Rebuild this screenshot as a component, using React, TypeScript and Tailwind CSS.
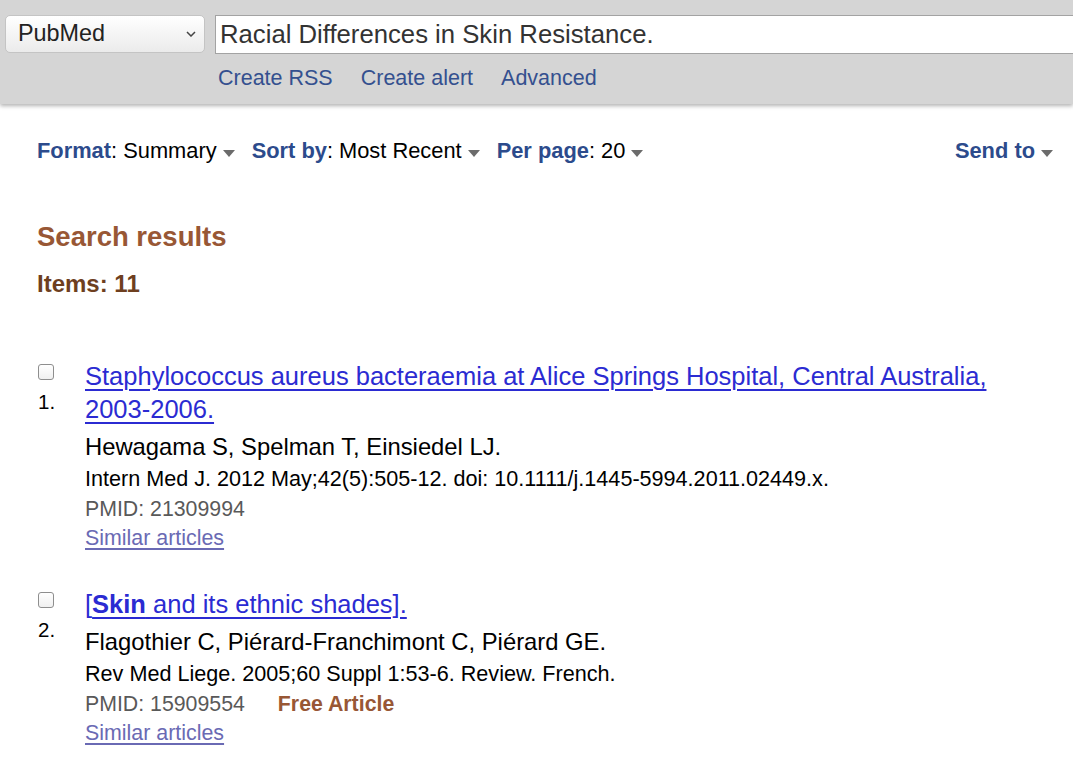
import React from "react";

function Caret() {
  return (
    <svg width="12" height="7" viewBox="0 0 12 7" className="ml-[6px] mt-[4px] shrink-0">
      <path d="M0 0 L12 0 L6 7 Z" fill="#6b6b6b" />
    </svg>
  );
}

function Checkbox() {
  return (
    <div className="w-[16px] h-[16px] rounded-[3px] border border-[#8e8e8e] bg-gradient-to-b from-white to-[#f0f0f0]" />
  );
}

type Item = {
  n: number;
  title: React.ReactNode;
  authors: string;
  journal: string;
  pmid: string;
  free?: boolean;
};

const items: Item[] = [
  {
    n: 1,
    title: (
      <>
        Staphylococcus aureus bacteraemia at Alice Springs Hospital, Central Australia, 2003-2006.
      </>
    ),
    authors: "Hewagama S, Spelman T, Einsiedel LJ.",
    journal: "Intern Med J. 2012 May;42(5):505-12. doi: 10.1111/j.1445-5994.2011.02449.x.",
    pmid: "21309994",
  },
  {
    n: 2,
    title: (
      <>
        [<b>Skin</b> and its ethnic shades].
      </>
    ),
    authors: "Flagothier C, Piérard-Franchimont C, Piérard GE.",
    journal: "Rev Med Liege. 2005;60 Suppl 1:53-6. Review. French.",
    pmid: "15909554",
    free: true,
  },
];

export default function App() {
  return (
    <div className="min-h-[774px] bg-white font-['Liberation_Sans',Arial,sans-serif] overflow-hidden">
      <header className="relative h-[104px] bg-[#d5d5d5] shadow-[0_2px_4px_rgba(0,0,0,0.3)]">
        <div className="flex pt-[15px] pl-[5px] gap-[10px]">
          <div className="w-[200px] h-[38px] shrink-0 rounded-[5px] border border-[#c4c4c4] bg-gradient-to-b from-white to-[#ebebeb] flex items-center justify-between pl-[12px] pr-[8px]">
            <span className="text-[23.4px] leading-none text-[#222]">PubMed</span>
            <svg width="10" height="6" viewBox="0 0 10 6">
              <path d="M1 1 L5 5 L9 1" stroke="#444" strokeWidth="1.5" fill="none" />
            </svg>
          </div>
          <div className="flex-1 h-[39px] bg-white border-y border-l border-[#a3a3a3] flex items-center pl-[4px]">
            <span className="text-[25.7px] leading-none text-[#333]">Racial Differences in Skin Resistance.</span>
          </div>
        </div>
        <nav className="flex gap-[28px] pl-[218px] mt-[12px] text-[21.5px] leading-[24px] text-[#34508f]">
          <span>Create RSS</span>
          <span>Create alert</span>
          <span>Advanced</span>
        </nav>
      </header>

      <main className="px-[37px]">
        <div className="flex items-center pt-[35px] text-[21.85px] leading-[24px] text-black">
          <div className="flex items-center">
            <span className="font-bold text-[#2c4b8c]">Format</span>
            <span>: Summary</span>
            <Caret />
          </div>
          <div className="flex items-center ml-[17px]">
            <span className="font-bold text-[#2c4b8c]">Sort by</span>
            <span>: Most Recent</span>
            <Caret />
          </div>
          <div className="flex items-center ml-[17px]">
            <span className="font-bold text-[#2c4b8c]">Per page</span>
            <span>: 20</span>
            <Caret />
          </div>
          <div className="flex items-center ml-auto mr-[-17px]">
            <span className="font-bold text-[#2c4b8c]">Send to</span>
            <Caret />
          </div>
        </div>

        <h2 className="mt-[58px] text-[27.5px] leading-[32px] font-bold text-[#985735]">Search results</h2>
        <div className="mt-[17px] text-[24px] leading-[28px] font-bold text-[#6e3f1f]">Items: 11</div>

        <div className="mt-[62px] flex flex-col gap-[36px]">
          {items.map((it) => (
            <div key={it.n} className="flex">
              <div className="w-[48px] shrink-0 flex flex-col items-start pl-[1px]">
                <div className="mt-[4px]">
                  <Checkbox />
                </div>
                <span className="mt-[10px] text-[20.5px] leading-[24px] text-black">{it.n}.</span>
              </div>
              <div className="flex flex-col">
                <a className="text-[25.5px] leading-[33px] text-[#2b2bd2] underline underline-offset-[4px] decoration-[1.5px]">
                  {it.title}
                </a>
                <div className="mt-[5px] text-[23.8px] leading-[32px] text-black">{it.authors}</div>
                <div className="text-[21.6px] leading-[31px] text-black">{it.journal}</div>
                <div className="flex text-[21.3px] leading-[31px]">
                  <span className="text-[#595959]">PMID: {it.pmid}</span>
                  {it.free && <span className="ml-[33px] font-bold text-[#985735]">Free Article</span>}
                </div>
                <a className="text-[21.4px] leading-[27px] text-[#6a6ab4] underline underline-offset-[3px]">
                  Similar articles
                </a>
              </div>
            </div>
          ))}
        </div>
      </main>
    </div>
  );
}
